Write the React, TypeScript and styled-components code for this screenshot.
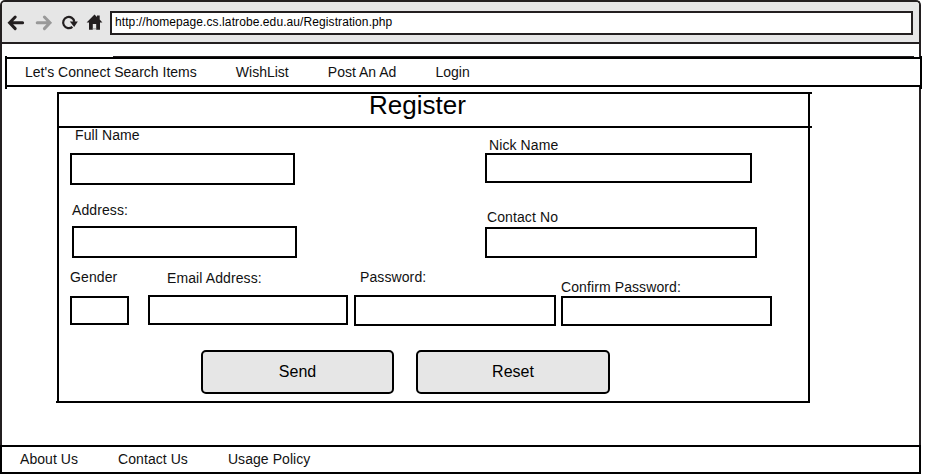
import React from 'react';
import styled, { createGlobalStyle } from 'styled-components';

const GlobalStyle = createGlobalStyle`
  * { box-sizing: border-box; }
  body { margin: 0; background: #fff; font-family: "Liberation Sans", Arial, sans-serif; color: #111; overflow: hidden; }
`;

const Browser = styled.div`
  width: 921px;
  height: 474px;
  display: flex;
  flex-direction: column;
  border: 2px solid #231f20;
  border-bottom: 0;
  border-radius: 5px 5px 0 0;
`;

const Toolbar = styled.header`
  height: 42px;
  flex: none;
  display: flex;
  align-items: flex-start;
  padding: 9px 6px 0 5px;
  background: #e6e6e6;
  border-bottom: 2px solid #231f20;
  border-radius: 3px 3px 0 0;
`;

const ToolbarIcons = styled.svg`
  width: 103px;
  height: 24px;
  flex: none;
`;

const AddressBar = styled.div`
  width: 803px;
  height: 24px;
  border: 2px solid #231f20;
  background: #fff;
  padding: 0 0 0 3px;
  font-size: 12px;
  line-height: 18px;
  color: #000;
  letter-spacing: 0.09px;
`;

const Nav = styled.nav`
  position: relative;
  width: 917px;
  height: 30px;
  flex: none;
  margin: 13px 0 0 3px;
  display: flex;
  gap: 39px;
  padding-left: 18px;
  background: #fff;
  border: 2px solid #000;
  font-size: 14px;
  line-height: 27px;
  &::before {
    content: '';
    position: absolute;
    inset: -3px -2px -4px;
    border: solid #000;
    border-width: 0 2px;
  }
  &::after {
    content: '';
    position: absolute;
    left: 106px;
    right: 6px;
    top: -3px;
    height: 1px;
    background: #231f20;
  }
`;

const NavLink = styled.a<{ $spacing?: number }>`
  white-space: nowrap;
  letter-spacing: ${p => p.$spacing ?? 0.01}px;
`;

const Panel = styled.form`
  position: relative;
  width: 753px;
  height: 311px;
  flex: none;
  margin: 5px 0 0 55px;
  border: 2px solid #000;
  &::before {
    content: '';
    position: absolute;
    left: -3px;
    bottom: -2px;
    width: 1px;
    height: 2px;
    background: #000;
  }
  &::after {
    content: '';
    position: absolute;
    right: -4px;
    top: -2px;
    width: 2px;
    height: 32px;
    border: solid #000;
    border-width: 2px 0;
  }
`;

const Title = styled.h1`
  height: 34px;
  margin: 0;
  padding-left: 310px;
  border-bottom: 2px solid #000;
  font-size: 26px;
  font-weight: 400;
  line-height: 22px;
  color: #000;
`;

const Row = styled.div<{ $height: number }>`
  height: ${p => p.$height}px;
  display: flex;
  align-items: flex-start;
`;

interface FieldProps { $left: number; $top?: number }

const Field = styled.label<FieldProps>`
  display: flex;
  flex-direction: column;
  flex: none;
  margin: ${p => p.$top ?? 0}px 0 0 ${p => p.$left}px;
`;

const Caption = styled.span<{ $indent: number; $spacing?: number }>`
  height: 14px;
  padding-left: ${p => p.$indent}px;
  font-size: 14px;
  line-height: 14px;
  white-space: nowrap;
  letter-spacing: ${p => p.$spacing ?? 0.1}px;
`;

const Input = styled.input<{ $width: number; $height: number; $gap: number }>`
  width: ${p => p.$width}px;
  height: ${p => p.$height}px;
  margin: ${p => p.$gap}px 0 0;
  padding: 0 6px;
  border: 2px solid #000;
  border-radius: 0;
  background: #fff;
  outline: none;
`;

const Actions = styled.div`
  display: flex;
  gap: 22px;
  padding-left: 142px;
`;

const Button = styled.button<{ $width: number }>`
  width: ${p => p.$width}px;
  height: 44px;
  padding: 0;
  border: 2px solid #000;
  border-radius: 5px;
  background: #e6e6e6;
  font: 16px "Liberation Sans", Arial, sans-serif;
  color: #000;
`;

const Footer = styled.footer`
  height: 29px;
  width: 921px;
  flex: none;
  margin: auto 0 0 -2px;
  display: flex;
  gap: 40px;
  padding-left: 18px;
  border: 2px solid #000;
  font-size: 14px;
  line-height: 25px;
`;

export default function App() {
  return (
    <>
      <GlobalStyle />
      <Browser>
        <Toolbar>
          <ToolbarIcons viewBox="7 11 103 24" fill="none">
            <path d="M22.6 22.8H10M15.2 17l-5.6 5.8 5.6 5.8" stroke="#231f20" strokeWidth="3" strokeLinecap="round" />
            <path d="M37.2 22.8H50M44.4 17l5.6 5.8-5.6 5.8" stroke="#999" strokeWidth="3" strokeLinecap="round" />
            <path d="M72.4 26.8a5.6 5.6 0 1 1 1.9-5" stroke="#231f20" strokeWidth="2.2" />
            <path d="M69.8 21.6h8l-3.6 5.4z" fill="#231f20" />
            <path d="M94.5 14.6l2.5 2.4V15.6h2.7v4L102.4 22.4H100v7.4h-3.8V24h-3.4v5.8H89v-7.4h-2.4z" fill="#231f20" />
            <path d="M92.8 28.8h3.4" stroke="#999" />
          </ToolbarIcons>
          <AddressBar>http://homepage.cs.latrobe.edu.au/Registration.php</AddressBar>
        </Toolbar>
        <Nav>
          <NavLink>Let's Connect Search Items</NavLink>
          <NavLink>WishList</NavLink>
          <NavLink>Post An Ad</NavLink>
          <NavLink>Login</NavLink>
        </Nav>
        <Panel>
          <Title>Register</Title>
          <Row $height={75}>
            <Field $left={11}>
              <Caption $indent={5}>Full Name</Caption>
              <Input $width={225} $height={32} $gap={11} />
            </Field>
            <Field $left={190} $top={10}>
              <Caption $indent={4}>Nick Name</Caption>
              <Input $width={267} $height={30} $gap={1} />
            </Field>
          </Row>
          <Row $height={67}>
            <Field $left={13}>
              <Caption $indent={0}>Address:</Caption>
              <Input $width={225} $height={32} $gap={9} />
            </Field>
            <Field $left={188} $top={7}>
              <Caption $indent={2}>Contact No</Caption>
              <Input $width={272} $height={31} $gap={3} />
            </Field>
          </Row>
          <Row $height={80}>
            <Field $left={11}>
              <Caption $indent={0}>Gender</Caption>
              <Input $width={59} $height={29} $gap={12} />
            </Field>
            <Field $left={19} $top={1}>
              <Caption $indent={19}>Email Address:</Caption>
              <Input $width={200} $height={30} $gap={10} />
            </Field>
            <Field $left={6}>
              <Caption $indent={6}>Password:</Caption>
              <Input $width={202} $height={31} $gap={11} />
            </Field>
            <Field $left={5} $top={10}>
              <Caption $indent={0}>Confirm Password:</Caption>
              <Input $width={211} $height={30} $gap={2} />
            </Field>
          </Row>
          <Actions>
            <Button type="button" $width={193}>Send</Button>
            <Button type="button" $width={194}>Reset</Button>
          </Actions>
        </Panel>
        <Footer>
          <NavLink $spacing={0.06}>About Us</NavLink>
          <NavLink $spacing={0.06}>Contact Us</NavLink>
          <NavLink $spacing={0.06}>Usage Policy</NavLink>
        </Footer>
      </Browser>
    </>
  );
}
